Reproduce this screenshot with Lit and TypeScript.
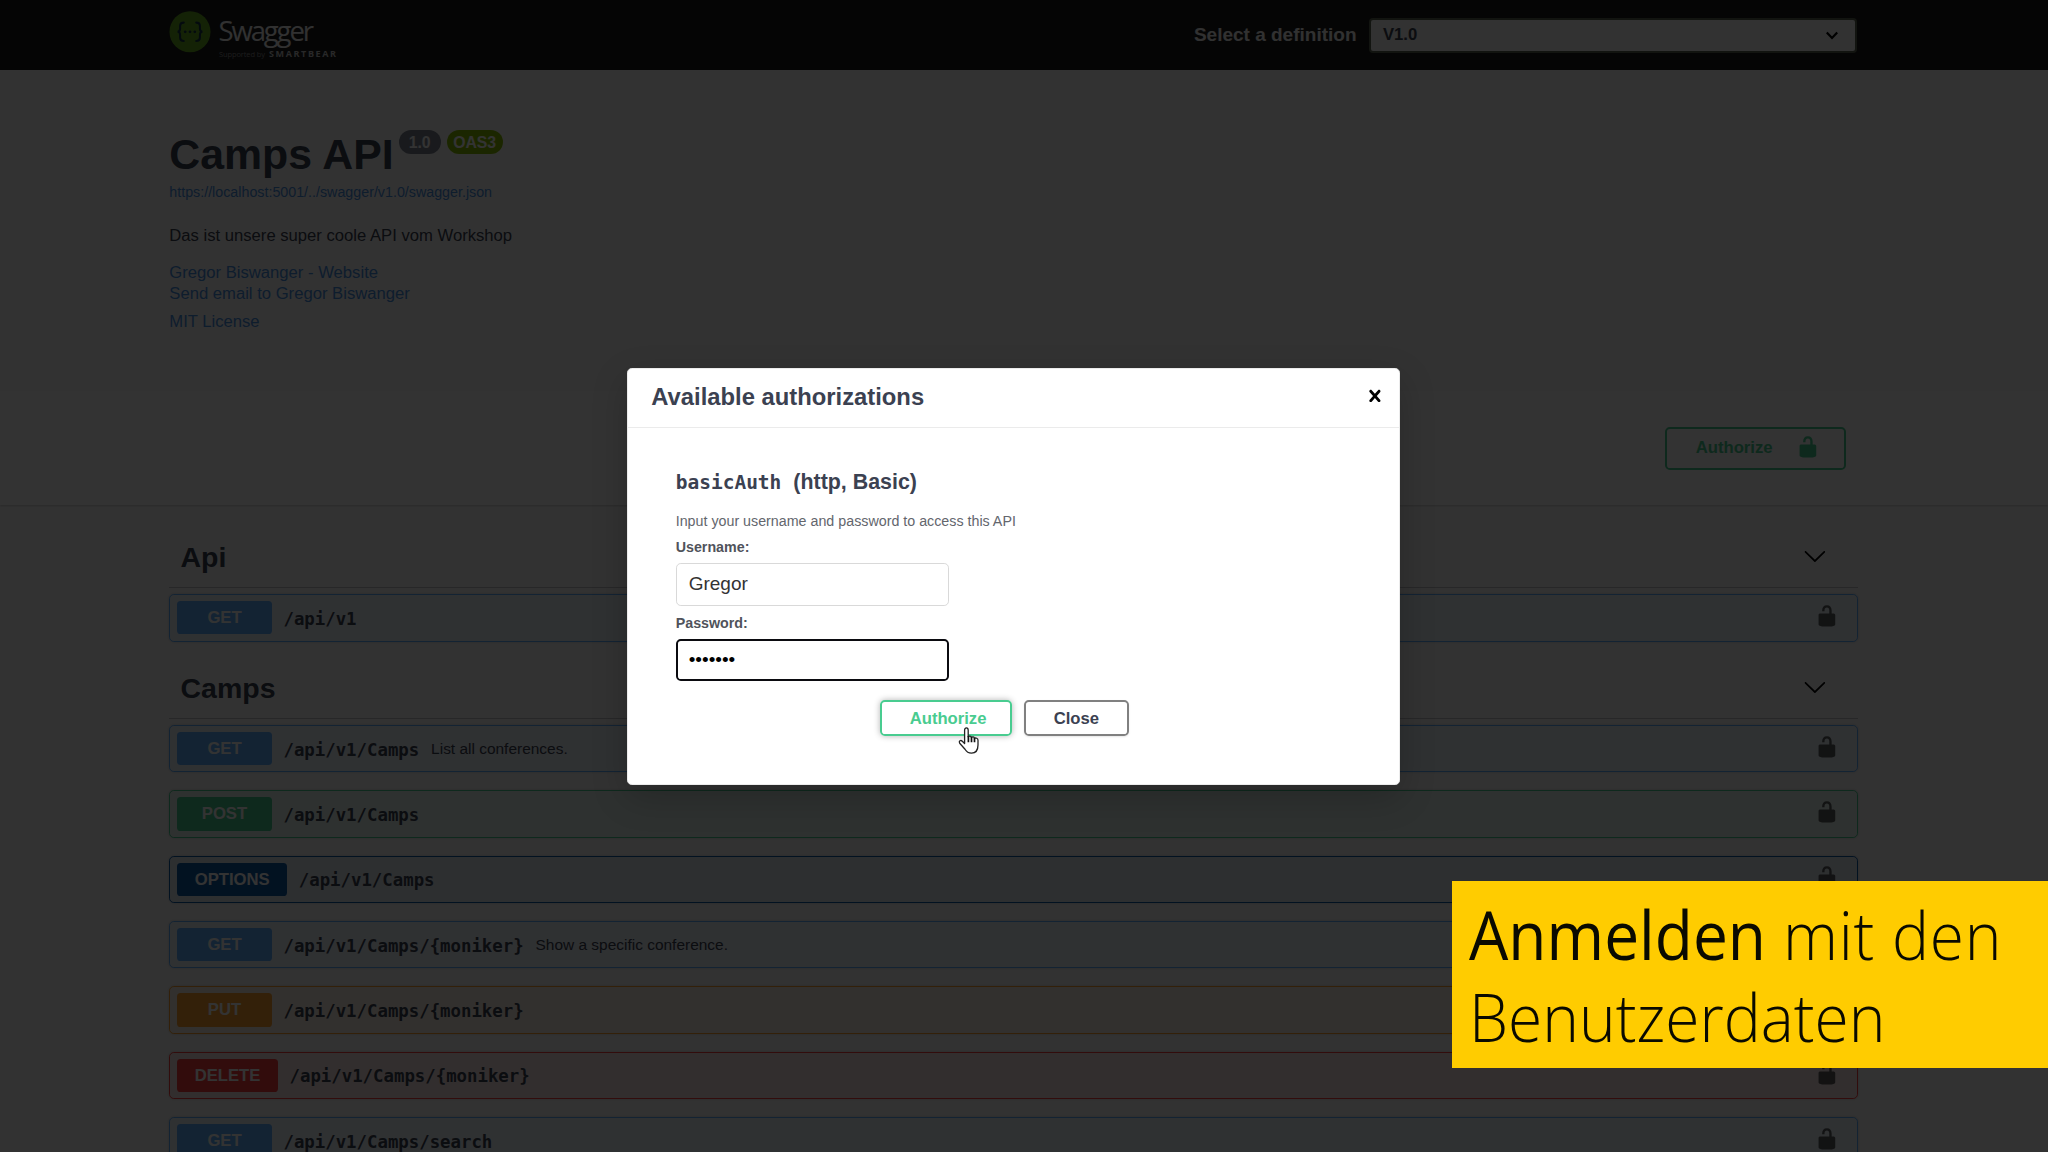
import { LitElement, html, css, svg, nothing } from "lit";
import { customElement, property } from "lit/decorators.js";

interface Operation {
  method: "get" | "post" | "options" | "put" | "delete";
  path: string;
  summary?: string;
}

interface Tag {
  name: string;
  operations: Operation[];
}

const TAGS: Tag[] = [
  { name: "Api", operations: [{ method: "get", path: "/api/v1" }] },
  {
    name: "Camps",
    operations: [
      { method: "get", path: "/api/v1/Camps", summary: "List all conferences." },
      { method: "post", path: "/api/v1/Camps" },
      { method: "options", path: "/api/v1/Camps" },
      { method: "get", path: "/api/v1/Camps/{moniker}", summary: "Show a specific conference." },
      { method: "put", path: "/api/v1/Camps/{moniker}" },
      { method: "delete", path: "/api/v1/Camps/{moniker}" },
      { method: "get", path: "/api/v1/Camps/search" },
    ],
  },
];

const unlocked = svg`<path d="M15.8 8H14V5.6C14 2.703 12.665 1 10 1 7.334 1 6 2.703 6 5.6V6h2v-.801C8 3.754 8.797 3 10 3c1.203 0 2 .754 2 2.199V8H4c-.553 0-1 .646-1 1.199V17c0 .549.428 1.139.951 1.307l1.197.387C5.672 18.861 6.55 19 7.1 19h5.8c.549 0 1.428-.139 1.951-.307l1.196-.387c.524-.167.953-.757.953-1.306V9.199C17 8.646 16.352 8 15.8 8z"/>`;
const arrow = svg`<path d="M17.418 6.109c.272-.268.709-.268.979 0s.271.701 0 .969l-7.908 7.83c-.27.268-.707.268-.979 0l-7.908-7.83c-.27-.268-.27-.701 0-.969.271-.268.709-.268.979 0L10 13.25l7.418-7.141z"/>`;
const cross = svg`<path d="M14.348 14.849c-.469.469-1.229.469-1.697 0L10 11.819l-2.651 3.029c-.469.469-1.229.469-1.697 0-.469-.469-.469-1.229 0-1.697l2.758-3.15-2.759-3.152c-.469-.469-.469-1.228 0-1.697.469-.469 1.228-.469 1.697 0L10 8.183l2.651-3.031c.469-.469 1.228-.469 1.697 0 .469.469.469 1.229 0 1.697l-2.758 3.152 2.758 3.15c.469.469.469 1.229 0 1.698z"/>`;

const icon = (shape: unknown) =>
  html`<svg class="icon" viewBox="0 0 20 20" width="23.8" height="23.8">${shape}</svg>`;

const iconStyles = css`
  .icon {
    display: block;
    flex: none;
    fill: currentColor;
  }
`;

@customElement("top-bar")
class TopBar extends LitElement {
  static styles = css`
    :host {
      display: block;
      background: #1b1b1b;
      height: 70.3px;
    }
    .inner {
      display: flex;
      justify-content: space-between;
      width: 1688px;
      margin-left: 169px;
    }
    .logo {
      display: block;
    }
    .picker {
      display: flex;
      align-items: center;
      gap: 12.5px;
      height: 70.3px;
    }
    .label {
      font: bold 19px/24px "Liberation Sans", Arial, sans-serif;
      color: #f4f4f4;
    }
    .select {
      box-sizing: border-box;
      display: flex;
      align-items: center;
      justify-content: space-between;
      width: 488px;
      height: 35px;
      padding: 0 16px 0 12px;
      border: 2px solid #5c6650;
      border-radius: 4px;
      background: #f7f7f7;
      font: bold 16.65px/20px "Liberation Sans", Arial, sans-serif;
      color: #3b4151;
    }
  `;
  render() {
    return html`<div class="inner">
      <svg class="logo" width="180" height="70" viewBox="0 0 180 70">
        <circle cx="21" cy="31.8" r="20.5" fill="#66ac22" />
        <g fill="none" stroke="#173647" stroke-width="2.1" stroke-linecap="round">
          <path d="M14.8 22.6c-3 0-3.7 1-3.7 3.2v2.8c0 2-.8 3.2-2.6 3.2 1.8 0 2.6 1.2 2.6 3.2v2.8c0 2.2.7 3.2 3.7 3.2" />
          <path d="M27.2 22.6c3 0 3.7 1 3.7 3.2v2.8c0 2 .8 3.2 2.6 3.2-1.8 0-2.6 1.2-2.6 3.2v2.8c0 2.2-.7 3.2-3.7 3.2" />
        </g>
        <g fill="#173647">
          <circle cx="16.2" cy="31.8" r="1.4" />
          <circle cx="21" cy="31.8" r="1.4" />
          <circle cx="25.8" cy="31.8" r="1.4" />
        </g>
        <text x="49.5" y="40.6" textLength="95.5" font-family="Open Sans, sans-serif" font-size="27.5" fill="#f2f2f2">Swagger</text>
        <text x="50" y="56.6" textLength="46" font-family="Open Sans, sans-serif" font-size="7.5" fill="#8a8a8a">Supported by</text>
        <text x="100" y="56.6" textLength="67" font-family="Open Sans, sans-serif" font-weight="bold" font-size="9" fill="#c8c8c8">SMARTBEAR</text>
      </svg>
      <div class="picker">
        <span class="label">Select a definition</span>
        <div class="select">
          <span>V1.0</span>
          <svg width="14" height="9" viewBox="0 0 14 9">
            <path d="M1.8 1.5 7 7l5.2-5.5" fill="none" stroke="#000" stroke-width="2.2" />
          </svg>
        </div>
      </div>
    </div>`;
  }
}

@customElement("api-info")
class ApiInfo extends LitElement {
  static styles = css`
    :host {
      display: block;
      box-sizing: border-box;
      height: 320.7px;
      padding: 59.2px 0 0 169.3px;
      font: 16.65px/20px "Liberation Sans", Arial, sans-serif;
      color: #3b4151;
    }
    .title {
      display: flex;
      align-items: flex-start;
      height: 50px;
    }
    .name {
      font-size: 42.8px;
      line-height: 50px;
      font-weight: bold;
    }
    .badge {
      box-sizing: border-box;
      height: 24px;
      width: 42px;
      margin: 1px 0 0 5px;
      border-radius: 12px;
      background: #7d8492;
      color: #fff;
      font-size: 15.8px;
      font-weight: bold;
      line-height: 25px;
      text-align: center;
    }
    .oas {
      width: 56px;
      margin-left: 6px;
      background: #89bf04;
    }
    .link {
      color: #4990e2;
    }
    .url {
      margin-top: 2.3px;
      font-size: 14.27px;
    }
    .description {
      margin-top: 24px;
    }
    .website {
      margin-top: 17.3px;
    }
    .email {
      margin-top: 1.3px;
    }
    .license {
      margin-top: 7.2px;
    }
  `;
  render() {
    return html`
      <div class="title">
        <span class="name">Camps API</span>
        <span class="badge">1.0</span>
        <span class="badge oas">OAS3</span>
      </div>
      <div class="link url">https://localhost:5001/../swagger/v1.0/swagger.json</div>
      <div class="description">Das ist unsere super coole API vom Workshop</div>
      <div class="link website">Gregor Biswanger - Website</div>
      <div class="link email">Send email to Gregor Biswanger</div>
      <div class="link license">MIT License</div>
    `;
  }
}

@customElement("scheme-bar")
class SchemeBar extends LitElement {
  static styles = [
    iconStyles,
    css`
      :host {
        display: flex;
        justify-content: flex-end;
        box-sizing: border-box;
        height: 114.3px;
        padding: 35.7px 202px 35.7px 0;
        background: #fdfdfd;
        box-shadow: 0 1px 2px rgba(0, 0, 0, 0.18);
      }
      .authorize {
        box-sizing: border-box;
        display: flex;
        align-items: center;
        justify-content: space-between;
        width: 180.7px;
        height: 43px;
        padding: 0 24.5px 0 28.5px;
        border: 2.4px solid #49cc90;
        border-radius: 4.8px;
        font: bold 16.65px/20px "Liberation Sans", Arial, sans-serif;
        color: #49cc90;
      }
      .icon {
        margin-bottom: 3px;
      }
    `,
  ];
  render() {
    return html`<div class="authorize"><span>Authorize</span>${icon(unlocked)}</div>`;
  }
}

@customElement("operation-row")
class OperationRow extends LitElement {
  static styles = [
    iconStyles,
    css`
      :host {
        display: block;
      }
      .row {
        --tone: 97, 175, 254;
        box-sizing: border-box;
        display: flex;
        align-items: center;
        height: 47.6px;
        padding: 0 17.5px 0 6.6px;
        border: 1.5px solid rgb(var(--tone));
        border-radius: 4.8px;
        background: rgba(var(--tone), 0.1);
        box-shadow: 0 0 3px rgba(0, 0, 0, 0.19);
        font-family: "Liberation Sans", Arial, sans-serif;
        color: #3b4151;
      }
      .post {
        --tone: 73, 204, 144;
      }
      .options {
        --tone: 13, 90, 167;
      }
      .put {
        --tone: 252, 161, 48;
      }
      .delete {
        --tone: 249, 62, 62;
      }
      .method {
        box-sizing: border-box;
        min-width: 95.2px;
        height: 33.3px;
        padding: 0 17.8px;
        border-radius: 3.6px;
        background: rgb(var(--tone));
        color: #fff;
        font-size: 16.65px;
        font-weight: bold;
        line-height: 34px;
        text-align: center;
      }
      .path {
        margin: 2px 0 0 11.4px;
        font: bold 17.35px/20px "DejaVu Sans Mono", monospace;
      }
      .summary {
        margin-left: 11.9px;
        font-size: 15.46px;
        line-height: 20px;
      }
      .icon {
        margin: 0 0 4px auto;
        opacity: 0.7;
        color: #222;
      }
    `,
  ];
  @property({ attribute: false }) operation!: Operation;
  render() {
    const { method, path, summary } = this.operation;
    return html`<div class="row ${method}">
      <span class="method">${method.toUpperCase()}</span>
      <span class="path">${path}</span>
      ${summary ? html`<span class="summary">${summary}</span>` : nothing}
      ${icon(unlocked)}
    </div>`;
  }
}

@customElement("tag-section")
class TagSection extends LitElement {
  static styles = [
    iconStyles,
    css`
      :host {
        display: block;
      }
      .header {
        box-sizing: border-box;
        display: flex;
        align-items: center;
        justify-content: space-between;
        height: 59.2px;
        padding: 0 30.8px 1px 11.2px;
        margin-bottom: 6.2px;
        border-bottom: 1.2px solid rgba(59, 65, 81, 0.3);
        font: bold 28.5px/34px "Liberation Sans", Arial, sans-serif;
        color: #3b4151;
      }
      .icon {
        margin-bottom: 2px;
        color: #000;
      }
      .rows {
        display: flex;
        flex-direction: column;
        gap: 17.8px;
      }
    `,
  ];
  @property({ attribute: false }) tag!: Tag;
  render() {
    return html`
      <div class="header"><span>${this.tag.name}</span>${icon(arrow)}</div>
      <div class="rows">
        ${this.tag.operations.map((o) => html`<operation-row .operation=${o}></operation-row>`)}
      </div>
    `;
  }
}

@customElement("auth-dialog")
class AuthDialog extends LitElement {
  static styles = [
    iconStyles,
    css`
      :host {
        display: block;
        box-sizing: border-box;
        width: 773px;
        height: 416.5px;
        border: 1px solid #ebebeb;
        border-radius: 4.8px;
        background: #fff;
        box-shadow: 0 12px 36px rgba(0, 0, 0, 0.2);
        font: 14.27px/18px "Liberation Sans", Arial, sans-serif;
        color: #3b4151;
      }
      .header {
        box-sizing: border-box;
        display: flex;
        align-items: center;
        justify-content: space-between;
        height: 59px;
        padding: 0 13px 3px 23px;
        border-bottom: 1.2px solid #ebebeb;
        font-size: 23.8px;
        line-height: 28px;
        font-weight: bold;
      }
      .header .icon {
        margin-bottom: 2px;
        color: #000;
      }
      .body {
        display: flex;
        flex-direction: column;
        padding: 40.7px 47.4px 0;
      }
      .scheme {
        display: flex;
        align-items: baseline;
        gap: 12px;
        height: 26px;
        font-size: 21.4px;
        line-height: 26px;
        font-weight: bold;
      }
      .code {
        font: bold 19.5px/26px "DejaVu Sans Mono", monospace;
      }
      .hint {
        margin-top: 17px;
        color: #63666d;
      }
      .caption {
        margin-top: 8.4px;
        font-weight: bold;
        color: #50535b;
      }
      .second {
        margin-top: 8.4px;
      }
      .field {
        box-sizing: border-box;
        width: 273.6px;
        height: 42.3px;
        margin-top: 7px;
        padding: 0 12px;
        border: 1.2px solid #d9d9d9;
        border-radius: 4.8px;
        font-size: 19px;
        line-height: 40px;
        color: #333;
      }
      .focused {
        padding: 0 11px;
        border: 2.4px solid #0b0b10;
        line-height: 37px;
        color: #000;
      }
      .actions {
        display: flex;
        gap: 12px;
        margin: 18.4px 0 0 204.4px;
      }
      .button {
        box-sizing: border-box;
        width: 104.6px;
        height: 36px;
        border: 2.4px solid #808080;
        border-radius: 4.8px;
        box-shadow: 0 1px 2px rgba(0, 0, 0, 0.1);
        font-size: 16.65px;
        line-height: 33px;
        font-weight: bold;
        text-align: center;
      }
      .primary {
        width: 132px;
        padding-left: 4px;
        border-color: #49cc90;
        color: #49cc90;
        box-shadow: 0 0 6px rgba(0, 0, 0, 0.3);
      }
    `,
  ];
  render() {
    return html`
      <div class="header"><span>Available authorizations</span>${icon(cross)}</div>
      <div class="body">
        <div class="scheme"><span class="code">basicAuth</span><span>(http, Basic)</span></div>
        <div class="hint">Input your username and password to access this API</div>
        <div class="caption">Username:</div>
        <div class="field">Gregor</div>
        <div class="caption second">Password:</div>
        <div class="field focused">•••••••</div>
        <div class="actions">
          <div class="button primary">Authorize</div>
          <div class="button">Close</div>
        </div>
      </div>
    `;
  }
}

@customElement("app-root")
class AppRoot extends LitElement {
  static styles = css`
    :host {
      display: block;
      position: relative;
      width: 2048px;
      height: 1152px;
      overflow: hidden;
      background: #fafafa;
    }
    .tags {
      display: flex;
      flex-direction: column;
      gap: 17.8px;
      width: 1688.4px;
      margin: 23.3px 0 0 169.3px;
    }
    .shade {
      position: absolute;
      inset: 0;
      background: rgba(0, 0, 0, 0.8);
    }
    .dialog {
      position: absolute;
      left: 627.3px;
      top: 368.3px;
    }
    .pointer {
      position: absolute;
      left: 957px;
      top: 726px;
    }
    .banner {
      position: absolute;
      left: 1452px;
      top: 881px;
      box-sizing: border-box;
      width: 596px;
      height: 187px;
      padding: 11.5px 0 0 16.5px;
      background: #ffcc00;
      color: #0a0a00;
      font: 300 67px/82px "Open Sans", "Noto Sans", sans-serif;
      white-space: nowrap;
    }
    .line {
      width: max-content;
      transform: scaleX(0.929);
      transform-origin: left;
    }
    .strong {
      font-weight: 500;
    }
    .rest {
      letter-spacing: 0.8px;
    }
  `;
  render() {
    return html`
      <top-bar></top-bar>
      <api-info></api-info>
      <scheme-bar></scheme-bar>
      <div class="tags">${TAGS.map((t) => html`<tag-section .tag=${t}></tag-section>`)}</div>
      <div class="shade"></div>
      <auth-dialog class="dialog"></auth-dialog>
      <svg class="pointer" width="26" height="30" viewBox="0 0 26 30">
        <path
          d="M7.6 17.5V4.2c0-3 3.6-3 3.6 0v6.6c.8-1.1 2.9-.8 3.2.6 1-.9 2.700-.5 3 .8 1.300-.5 3.600 0 3.600 2v4.800c0 5-2.400 8.200-6.500 8.200-3.400 0-5-1.300-6.500-3.900L2.700 17.200c-1.300-2 1-3.600 2.600-2z"
          fill="#fff" stroke="#222" stroke-width="1.3" stroke-linejoin="round" />
        <path d="M11.4 10v6.200M14.500 11v5.200M17.500 12v4.200" fill="none" stroke="#111" stroke-width="1.7" />
      </svg>
      <div class="banner">
        <div class="line"><span class="strong">Anmelden</span><span class="rest"> mit den</span></div>
        <div class="line">Benutzerdaten</div>
      </div>
    `;
  }
}
